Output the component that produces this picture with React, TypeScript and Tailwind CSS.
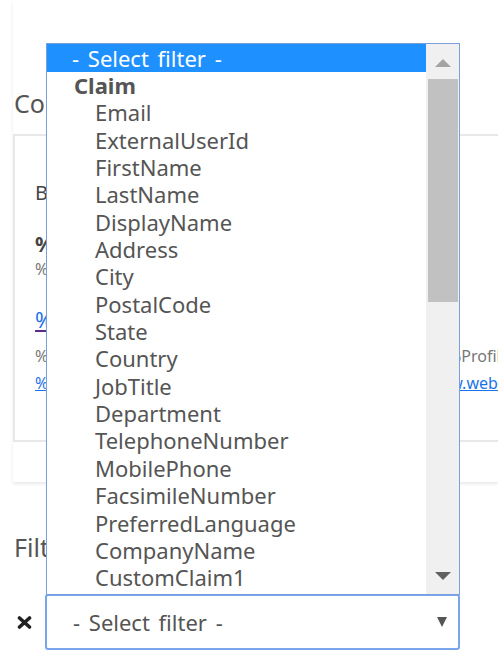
import React from "react";

const claimFields = [
  "Email",
  "ExternalUserId",
  "FirstName",
  "LastName",
  "DisplayName",
  "Address",
  "City",
  "PostalCode",
  "State",
  "Country",
  "JobTitle",
  "Department",
  "TelephoneNumber",
  "MobilePhone",
  "FacsimileNumber",
  "PreferredLanguage",
  "CompanyName",
  "CustomClaim1",
  "CustomClaim2",
];

function Triangle({ up, color }: { up?: boolean; color: string }) {
  return (
    <svg width="16" height="8" viewBox="0 0 16 8">
      <polygon points={up ? "0,8 16,8 8,0" : "0,0 16,0 8,8"} fill={color} />
    </svg>
  );
}

function FilterList() {
  return (
    <div className="absolute left-[46px] top-[43px] w-[414px] h-[552px] border border-[#7b9fdc] bg-white flex z-10">
      {/* options */}
      <div className="flex-1 overflow-hidden text-[22px] text-[#555]">
        <div className="h-[28px] leading-[28px] bg-[#1e90ff] text-white pl-[25px] whitespace-nowrap [word-spacing:3px]">
          - Select filter -
        </div>
        <div className="h-[27.35px] leading-[27.35px] pl-[27px] font-bold">Claim</div>
        {claimFields.map((f) => (
          <div key={f} className="h-[27.35px] leading-[27.35px] pl-[48px] whitespace-nowrap">
            {f}
          </div>
        ))}
      </div>

      {/* scrollbar */}
      <div className="w-[33px] bg-[#f0f0f0] flex flex-col items-center">
        <div className="h-[35px] pt-[15px] flex justify-center">
          <Triangle up color="#a3a3a3" />
        </div>
        <div className="w-[30px] h-[223px] bg-[#c1c1c1]" />
        <div className="flex-1" />
        <div className="h-[35px] pt-[13px] flex justify-center">
          <Triangle color="#606060" />
        </div>
      </div>
    </div>
  );
}

export default function App() {
  return (
    <div
      className="relative h-[666px] overflow-hidden bg-white text-[#555]"
      style={{ fontFamily: '"Noto Sans", sans-serif' }}
    >
      {/* previous card */}
      <div className="ml-[13px] h-[38px] bg-white shadow-[0_2px_3px_rgba(0,0,0,0.09)]" />

      {/* content card */}
      <div className="ml-[13px] pt-[50px] pb-[40px] bg-white shadow-[0_2px_3px_rgba(0,0,0,0.09)]">
        <h2 className="text-[25px] leading-[30px] pl-[1px] font-normal">Content</h2>
        <div className="mt-[16px] w-[520px] h-[308px] border-2 border-[#e8e8e8] pt-[43px] pl-[20px]">
          <div className="text-[20px] leading-[28px] text-[#444]">Business card</div>
          <div className="mt-[22px] text-[21px] leading-[30px] font-bold text-[#444]">%DisplayName%</div>
          <div className="text-[16px] leading-[20px] text-[#777]">%JobTitle%</div>
          <div className="mt-[25px] text-[22px] leading-[30px]">
            <a className="text-[#1a73e8] underline decoration-[#5b2c83]">%Email%</a>
          </div>
          <div className="mt-[12px] flex text-[16px] leading-[20px] text-[#777] whitespace-nowrap">
            <span className="w-[413px] shrink-0">%Department%</span>
            <span>%ProfileUrl%</span>
          </div>
          <div className="mt-[7px] flex text-[16px] leading-[20px] whitespace-nowrap">
            <span className="w-[390px] shrink-0">
              <a className="text-[#1a73e8] underline">%TelephoneNumber%</a>
            </span>
            <a className="text-[#1a73e8] underline">www.website.com</a>
          </div>
        </div>
      </div>

      {/* filter card */}
      <div className="ml-[13px] pt-[50px]">
        <h2 className="text-[25px] leading-[30px] pl-[1px] font-normal">Filters</h2>
        <div className="mt-[32px] flex items-center">
          <svg width="15" height="13" viewBox="0 0 15 13" className="ml-[4px] mr-[13px]">
            <path d="M2.5 2 L12.5 11 M12.5 2 L2.5 11" stroke="#222" strokeWidth="3.6" strokeLinecap="round" />
          </svg>
          <div className="w-[415px] h-[56px] border-2 border-[#78a5ec] rounded-[3px] flex items-center justify-between pl-[26px] pr-[11px]">
            <span className="text-[22px] text-[#555] whitespace-nowrap [word-spacing:3px]">- Select filter -</span>
            <svg width="10" height="10" viewBox="0 0 10 10">
              <polygon points="0,0 10,0 5,10" fill="#555" />
            </svg>
          </div>
        </div>
      </div>

      <FilterList />
    </div>
  );
}
